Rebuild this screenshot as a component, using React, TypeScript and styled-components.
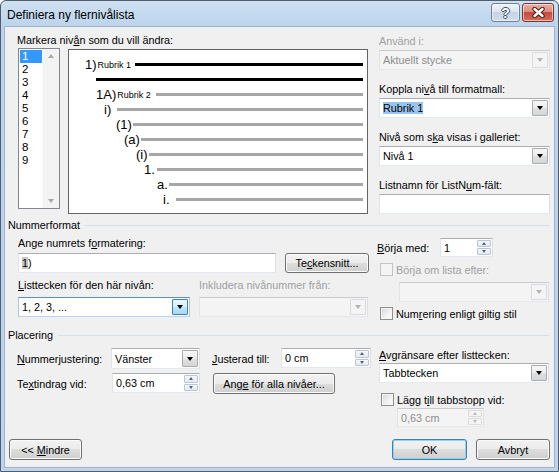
import React from "react";
import styled, { createGlobalStyle, css } from "styled-components";

const GlobalStyle = createGlobalStyle`
  html, body { margin: 0; padding: 0; background: #ffffff; }
  body {
    font-family: "Liberation Sans", Arial, sans-serif;
    font-size: 10.8px;
    color: #000;
  }
  * { box-sizing: border-box; }
`;

const Window = styled.div`
  width: 559px;
  height: 472px;
  border: 1px solid #4f5d6e;
  border-radius: 6px 6px 0 0;
  background: linear-gradient(180deg, #cfe0f2 0px, #bcd3eb 26px, #bed4ec 100%);
  padding: 0 3px 3px;
  display: flex;
  flex-direction: column;
`;

const TitleBar = styled.div`
  height: 25px;
  display: flex;
  align-items: flex-start;
  padding: 0 1px 0 3px;
`;

const TitleText = styled.div`
  font-size: 12px;
  line-height: 14px;
  margin-top: 7px;
`;

const CaptionButtons = styled.div`
  margin-left: auto;
  margin-top: 2px;
  display: flex;
  gap: 2px;
`;

const CaptionButton = styled.div<{ $close?: boolean }>`
  width: ${(p) => (p.$close ? 32 : 29)}px;
  height: 19px;
  border: 1px solid ${(p) => (p.$close ? "#6d3b33" : "#6f7f94")};
  border-radius: 3px;
  background: ${(p) =>
    p.$close
      ? "linear-gradient(180deg, #eab0a4 0%, #de8c7e 45%, #c74a3c 50%, #d46c5c 100%)"
      : "linear-gradient(180deg, #eef3f9 0%, #dbe5f0 45%, #c4d3e5 50%, #d2deec 100%)"};
  box-shadow: inset 0 0 0 1px rgba(255, 255, 255, 0.55);
  display: flex;
  align-items: center;
  justify-content: center;
`;

const HelpGlyph = styled.span`
  font-family: "Liberation Sans", Arial, sans-serif;
  font-weight: bold;
  font-size: 14px;
  line-height: 14px;
  color: #ffffff;
  text-shadow: 1px 0 #3d4e63, -1px 0 #3d4e63, 0 1px #3d4e63, 0 -1px #3d4e63;
`;

const Content = styled.div`
  flex: 1;
  border: 1px solid #9fb4cc;
  background: #f0f0f0;
  display: flex;
  flex-direction: column;
`;

const Key = styled.span`
  text-decoration: underline;
  text-underline-offset: 1px;
`;

const Label = styled.div<{ $disabled?: boolean }>`
  height: 14px;
  line-height: 14px;
  white-space: nowrap;
  color: ${(p) => (p.$disabled ? "#a0a0a0" : "#000")};
`;

/* ---------- top part ---------- */

const TopRow = styled.div`
  display: flex;
  padding: 6px 0 0 12px;
`;

const LevelPane = styled.div`
  width: 351px;
`;

const LevelRow = styled.div`
  display: flex;
  align-items: flex-start;
  margin-top: 1px;
`;

const LevelList = styled.div`
  margin-left: 1px;
  width: 42px;
  height: 161px;
  border: 1px solid #828790;
  background: #fff;
  display: flex;
`;

const LevelItems = styled.div`
  flex: 1;
  padding: 0 0 0 1px;
`;

const LevelItem = styled.div<{ $selected?: boolean }>`
  height: 13px;
  line-height: 13px;
  padding-left: 2px;
  font-size: 11.5px;
  background: ${(p) => (p.$selected ? "#3399ff" : "transparent")};
  color: ${(p) => (p.$selected ? "#fff" : "#000")};
  margin-top: ${(p) => (p.$selected ? 1 : 0)}px;
`;

const ScrollBar = styled.div`
  width: 17px;
  background: #f3f3f3;
  border-left: 1px solid #f8f8f8;
  display: flex;
  flex-direction: column;
  justify-content: space-between;
  align-items: center;
  padding: 5px 0 5px;
`;

const Arrow = styled.span<{ $up?: boolean; $color?: string; $half?: number }>`
  width: 0;
  height: 0;
  border-left: ${(p) => p.$half ?? 3.5}px solid transparent;
  border-right: ${(p) => p.$half ?? 3.5}px solid transparent;
  ${(p) =>
    p.$up
      ? `border-bottom: ${Math.ceil((p.$half ?? 3.5) + 0.5)}px solid ${p.$color ?? "#000"};`
      : `border-top: ${Math.ceil((p.$half ?? 3.5) + 0.5)}px solid ${p.$color ?? "#000"};`}
`;

const Preview = styled.div`
  margin-left: 8px;
  margin-top: 1px;
  width: 300px;
  height: 165px;
  border: 1px solid #646464;
  background: #fff;
  padding-top: 7px;
`;

const PreviewRow = styled.div`
  height: 15px;
  display: flex;
  align-items: center;
  padding-right: 4px;
`;

const Num = styled.span`
  flex: none;
  font-family: Arial, "Liberation Sans", sans-serif;
  font-size: 13px;
  line-height: 15px;
  white-space: nowrap;
  display: flex;
  align-items: center;
`;

const Heading = styled.span`
  font-size: 9px;
  margin-left: 1px;
  margin-top: 1px;
`;

const Bar = styled.span<{ $dark?: boolean }>`
  flex: 1;
  height: 3px;
  background: ${(p) => (p.$dark ? "#000" : "#a6a6a6")};
`;

const SidePane = styled.div`
  margin-left: 11px;
  margin-top: 1px;
  width: 171px;
  display: flex;
  flex-direction: column;
  gap: 12px;
`;

const Field = styled.div`
  display: flex;
  flex-direction: column;
  gap: 2px;
`;

/* ---------- inputs ---------- */

const fieldBorder = css`
  border: 1px solid;
  border-color: #abadb3 #dbdfe6 #e3e9ef #e2e3ea;
`;

const TextBox = styled.div<{ $w: number; $h?: number; $disabled?: boolean }>`
  width: ${(p) => p.$w}px;
  height: ${(p) => p.$h ?? 20}px;
  ${fieldBorder};
  ${(p) => p.$disabled && "border-color: #c9cbcf #dfe1e4 #e6e8eb #e2e3e6;"}
  background: ${(p) => (p.$disabled ? "#f4f4f4" : "#fff")};
  color: ${(p) => (p.$disabled ? "#8d8d8d" : "#000")};
  display: flex;
  align-items: center;
  padding-left: 3px;
  white-space: nowrap;
  flex: none;
`;

type ComboState = "normal" | "focus" | "disabled";

const ComboFrame = styled.div<{ $w: number; $h: number; $state: ComboState }>`
  width: ${(p) => p.$w}px;
  height: ${(p) => p.$h}px;
  ${fieldBorder};
  ${(p) => p.$state === "focus" && "border-color: #5b8fc1 #a8c8e8 #b6d2ec #a8c8e8;"}
  ${(p) => p.$state === "disabled" && "border-color: #c9cbcf #dfe1e4 #e6e8eb #e2e3e6;"}
  background: ${(p) => (p.$state === "disabled" ? "#f4f4f4" : "#fff")};
  color: ${(p) => (p.$state === "disabled" ? "#8d8d8d" : "#000")};
  display: flex;
  align-items: center;
  padding-left: 3px;
  white-space: nowrap;
  flex: none;
`;

const DropButton = styled.div<{ $state: ComboState }>`
  align-self: stretch;
  width: 16px;
  margin: 1px 1px 1px auto;
  border: 1px solid
    ${(p) => (p.$state === "focus" ? "#3c7fb1" : p.$state === "disabled" ? "#dadbdc" : "#a9aaac")};
  border-radius: 1px;
  background: ${(p) =>
    p.$state === "focus"
      ? "linear-gradient(180deg, #eaf6fd 0%, #d9f0fc 50%, #bee6fd 50%, #a7d9f5 100%)"
      : p.$state === "disabled"
      ? "#f4f4f4"
      : "linear-gradient(180deg, #f7f7f7 0%, #ececec 50%, #e0e0e0 50%, #d6d6d6 100%)"};
  display: flex;
  align-items: center;
  justify-content: center;
`;

const Selection = styled.span<{ $inactive?: boolean }>`
  background: ${(p) => (p.$inactive ? "#c6c6c6" : "#99c4ef")};
`;

function Combo({
  w,
  h = 20,
  state = "normal",
  children,
}: {
  w: number;
  h?: number;
  state?: ComboState;
  children?: React.ReactNode;
}) {
  return (
    <ComboFrame $w={w} $h={h} $state={state}>
      <span>{children}</span>
      <DropButton $state={state}>
        <Arrow $color={state === "disabled" ? "#b4b4b4" : "#000"} />
      </DropButton>
    </ComboFrame>
  );
}

const SpinColumn = styled.div`
  margin: 1px 1px 1px auto;
  align-self: stretch;
  width: 14px;
  display: flex;
  flex-direction: column;
  gap: 1px;
`;

const SpinButton = styled.div<{ $disabled?: boolean }>`
  flex: 1;
  border: 1px solid ${(p) => (p.$disabled ? "#dcdcdc" : "#bcc6d2")};
  border-radius: 1px;
  background: ${(p) =>
    p.$disabled ? "#f4f4f4" : "linear-gradient(180deg, #f5f8fb 0%, #e3eaf2 100%)"};
  display: flex;
  align-items: center;
  justify-content: center;
`;

function Spin({
  w,
  h = 20,
  disabled,
  children,
}: {
  w: number;
  h?: number;
  disabled?: boolean;
  children?: React.ReactNode;
}) {
  const c = disabled ? "#b8b8b8" : "#4e6283";
  return (
    <TextBox $w={w} $h={h} $disabled={disabled}>
      <span>{children}</span>
      <SpinColumn>
        <SpinButton $disabled={disabled}>
          <Arrow $up $half={2.5} $color={c} />
        </SpinButton>
        <SpinButton $disabled={disabled}>
          <Arrow $half={2.5} $color={c} />
        </SpinButton>
      </SpinColumn>
    </TextBox>
  );
}

const CheckRow = styled.div<{ $indent: number; $disabled?: boolean }>`
  display: flex;
  align-items: center;
  gap: 3px;
  margin-left: ${(p) => p.$indent}px;
  height: 13px;
  color: ${(p) => (p.$disabled ? "#a0a0a0" : "#000")};
  white-space: nowrap;
`;

const CheckBox = styled.span<{ $disabled?: boolean }>`
  width: 13px;
  height: 13px;
  flex: none;
  border: 1px solid ${(p) => (p.$disabled ? "#c4c4c4" : "#8e8f8f")};
  background: ${(p) =>
    p.$disabled ? "#f4f4f4" : "linear-gradient(135deg, #d6d6d6 0%, #f2f2f2 60%, #ffffff 100%)"};
  box-shadow: inset 0 0 0 1px #f4f4f4;
`;

const Button = styled.button<{ $w: number; $h?: number; $default?: boolean }>`
  width: ${(p) => p.$w}px;
  height: ${(p) => p.$h ?? 21}px;
  flex: none;
  font: inherit;
  color: #000;
  padding: 0;
  border: 1px solid ${(p) => (p.$default ? "#3c7fb1" : "#707070")};
  border-radius: 3px;
  background: linear-gradient(180deg, #f2f2f2 0%, #ebebeb 50%, #dddddd 50%, #cfcfcf 100%);
  box-shadow: inset 0 0 0 1px ${(p) => (p.$default ? "#8fd4f7" : "#fbfbfb")};
  text-align: center;
  white-space: nowrap;
`;

/* ---------- groups ---------- */

const GroupHeader = styled.div<{ $top: number }>`
  display: flex;
  align-items: center;
  height: 14px;
  margin: ${(p) => p.$top}px 5px 0 3px;
  white-space: nowrap;
  &::after {
    content: "";
    flex: 1;
    height: 1px;
    margin-left: 5px;
    background: #d5dfe5;
  }
`;

const NumBody = styled.div`
  display: flex;
  padding-left: 13px;
  margin-top: 4px;
`;

const NumLeft = styled.div`
  width: 351px;
`;

const Row = styled.div<{ $top?: number; $gap?: number; $indent?: number }>`
  display: flex;
  align-items: flex-start;
  margin-top: ${(p) => p.$top ?? 0}px;
  padding-left: ${(p) => p.$indent ?? 0}px;
  gap: ${(p) => p.$gap ?? 0}px;
`;

const Column = styled.div<{ $w: number }>`
  width: ${(p) => p.$w}px;
  display: flex;
  flex-direction: column;
  gap: 5px;
`;

const NumRight = styled.div`
  margin-left: 8px;
  width: 172px;
  display: flex;
  flex-direction: column;
`;

const StartRow = styled.div`
  display: flex;
  align-items: center;
  margin-top: 2px;
`;

const StartLabel = styled(Label)`
  width: 63px;
`;

const PlaceBody = styled.div`
  display: flex;
  padding-left: 12px;
  margin-top: 6px;
`;

const PlaceGrid = styled.div`
  display: grid;
  grid-template-columns: 94px 89px 12px 69px 90px;
  grid-template-rows: 21px 21px;
  row-gap: 4px;
  align-items: center;
`;

const Cell = styled.div<{ $col: string; $row: number; $shift?: number; $label?: boolean }>`
  grid-column: ${(p) => p.$col};
  grid-row: ${(p) => p.$row};
  margin-left: ${(p) => p.$shift ?? 0}px;
  align-self: ${(p) => (p.$label ? "center" : "start")};
`;

const PlaceRight = styled.div`
  margin-left: 8px;
  width: 170px;
  display: flex;
  flex-direction: column;
`;

const Footer = styled.div`
  margin-top: auto;
  display: flex;
  align-items: center;
  padding: 0 4px 7px;
  gap: 9px;
`;

const Spacer = styled.div`
  flex: 1;
`;

const previewRows = [
  { indent: 16, num: "1)", heading: "Rubrik 1", barAt: 66, dark: true },
  { indent: 27, num: "", heading: "", barAt: 27, dark: true },
  { indent: 27, num: "1A)", heading: "Rubrik 2", barAt: 87, dark: false },
  { indent: 35, num: "i)", heading: "", barAt: 48, dark: false },
  { indent: 47, num: "(1)", heading: "", barAt: 64, dark: false },
  { indent: 55, num: "(a)", heading: "", barAt: 72, dark: false },
  { indent: 67, num: "(i)", heading: "", barAt: 80, dark: false },
  { indent: 75, num: "1.", heading: "", barAt: 88, dark: false },
  { indent: 88, num: "a.", heading: "", barAt: 100, dark: false },
  { indent: 94, num: "i.", heading: "", barAt: 107, dark: false },
];

const levels = ["1", "2", "3", "4", "5", "6", "7", "8", "9"];

export default function App() {
  return (
    <>
      <GlobalStyle />
      <Window>
        <TitleBar>
          <TitleText>Definiera ny flernivålista</TitleText>
          <CaptionButtons>
            <CaptionButton>
              <HelpGlyph>?</HelpGlyph>
            </CaptionButton>
            <CaptionButton $close>
              <svg width="15" height="11" viewBox="0 0 15 11">
                <path d="M3.5 2 L11.5 9 M11.5 2 L3.5 9" stroke="#4a201a" strokeWidth="4.4" strokeLinecap="round" />
                <path d="M3.5 2 L11.5 9 M11.5 2 L3.5 9" stroke="#ffffff" strokeWidth="2.4" strokeLinecap="round" />
              </svg>
            </CaptionButton>
          </CaptionButtons>
        </TitleBar>

        <Content>
          <TopRow>
            <LevelPane>
              <Label>
                Markera niv<Key>å</Key>n som du vill ändra:
              </Label>
              <LevelRow>
                <LevelList>
                  <LevelItems>
                    {levels.map((l, i) => (
                      <LevelItem key={l} $selected={i === 0}>
                        {l}
                      </LevelItem>
                    ))}
                  </LevelItems>
                  <ScrollBar>
                    <Arrow $up $half={3.5} $color="#a8a8a8" />
                    <Arrow $half={3.5} $color="#a8a8a8" />
                  </ScrollBar>
                </LevelList>
                <Preview>
                  {previewRows.map((r, i) => (
                    <PreviewRow key={i}>
                      <Num style={{ marginLeft: r.indent, width: r.barAt - r.indent }}>
                        {r.num}
                        {r.heading && <Heading>{r.heading}</Heading>}
                      </Num>
                      <Bar $dark={r.dark} />
                    </PreviewRow>
                  ))}
                </Preview>
              </LevelRow>
            </LevelPane>

            <SidePane>
              <Field>
                <Label $disabled>Använd i:</Label>
                <Combo w={171} state="disabled">
                  Aktuellt stycke
                </Combo>
              </Field>
              <Field>
                <Label>
                  Koppla ni<Key>v</Key>å till formatmall:
                </Label>
                <Combo w={171}>
                  <Selection>Rubrik 1</Selection>
                </Combo>
              </Field>
              <Field>
                <Label>
                  Nivå som s<Key>k</Key>a visas i galleriet:
                </Label>
                <Combo w={171}>Nivå 1</Combo>
              </Field>
              <Field>
                <Label>
                  Listnamn för ListN<Key>u</Key>m-fält:
                </Label>
                <TextBox $w={171} />
              </Field>
            </SidePane>
          </TopRow>

          <GroupHeader $top={4}>Nummerformat</GroupHeader>
          <NumBody>
            <NumLeft>
              <Label>
                Ange numrets f<Key>o</Key>rmatering:
              </Label>
              <Row $top={3} $gap={9}>
                <TextBox $w={258}>
                  <span>
                    <Selection $inactive>1</Selection>)
                  </span>
                </TextBox>
                <Button $w={84} $h={20}>
                  Te<Key>c</Key>kensnitt...
                </Button>
              </Row>
              <Row $top={5} $gap={9}>
                <Column $w={172}>
                  <Label>
                    <Key>L</Key>isttecken för den här nivån:
                  </Label>
                  <Combo w={172} state="focus">
                    1, 2, 3, ...
                  </Combo>
                </Column>
                <Column $w={169}>
                  <Label $disabled>Inkludera nivånummer från:</Label>
                  <Combo w={169} state="disabled" />
                </Column>
              </Row>
            </NumLeft>

            <NumRight>
              <StartRow>
                <StartLabel>
                  <Key>B</Key>örja med:
                </StartLabel>
                <Spin w={53} h={19}>
                  1
                </Spin>
              </StartRow>
              <Row $top={6}>
                <CheckRow $indent={3} $disabled>
                  <CheckBox $disabled />
                  <span>Börja om lista efter:</span>
                </CheckRow>
              </Row>
              <Row $top={6} $indent={22}>
                <Combo w={150} state="disabled" />
              </Row>
              <Row $top={5}>
                <CheckRow $indent={3}>
                  <CheckBox />
                  <span>
                    Num<Key>r</Key>ering enligt giltig stil
                  </span>
                </CheckRow>
              </Row>
            </NumRight>
          </NumBody>

          <GroupHeader $top={8}>Placering</GroupHeader>
          <PlaceBody>
            <PlaceGrid>
              <Cell $col="1" $row={1} $label>
                <Label>
                  <Key>N</Key>ummerjustering:
                </Label>
              </Cell>
              <Cell $col="2" $row={1}>
                <Combo w={89} h={21}>
                  Vänster
                </Combo>
              </Cell>
              <Cell $col="4" $row={1} $label>
                <Label>
                  <Key>J</Key>usterad till:
                </Label>
              </Cell>
              <Cell $col="5" $row={1}>
                <Spin w={90}>0 cm</Spin>
              </Cell>
              <Cell $col="1" $row={2} $label>
                <Label>
                  Te<Key>x</Key>tindrag vid:
                </Label>
              </Cell>
              <Cell $col="2" $row={2} $shift={1}>
                <Spin w={88}>0,63 cm</Spin>
              </Cell>
              <Cell $col="4 / 6" $row={2} $shift={1}>
                <Button $w={122}>
                  Ang<Key>e</Key> för alla nivåer...
                </Button>
              </Cell>
            </PlaceGrid>

            <PlaceRight>
              <Label>
                <Key>A</Key>vgränsare efter listtecken:
              </Label>
              <Row $top={1}>
                <Combo w={170}>Tabbtecken</Combo>
              </Row>
              <Row $top={10}>
                <CheckRow $indent={2}>
                  <CheckBox />
                  <span>
                    Lägg t<Key>i</Key>ll tabbstopp vid:
                  </span>
                </CheckRow>
              </Row>
              <Row $top={2} $indent={18}>
                <Spin w={87} h={19} disabled>
                  0,63 cm
                </Spin>
              </Row>
            </PlaceRight>
          </PlaceBody>

          <Footer>
            <Button $w={73}>
              &lt;&lt; <Key>M</Key>indre
            </Button>
            <Spacer />
            <Button $w={75} $default>
              OK
            </Button>
            <Button $w={74}>Avbryt</Button>
          </Footer>
        </Content>
      </Window>
    </>
  );
}
